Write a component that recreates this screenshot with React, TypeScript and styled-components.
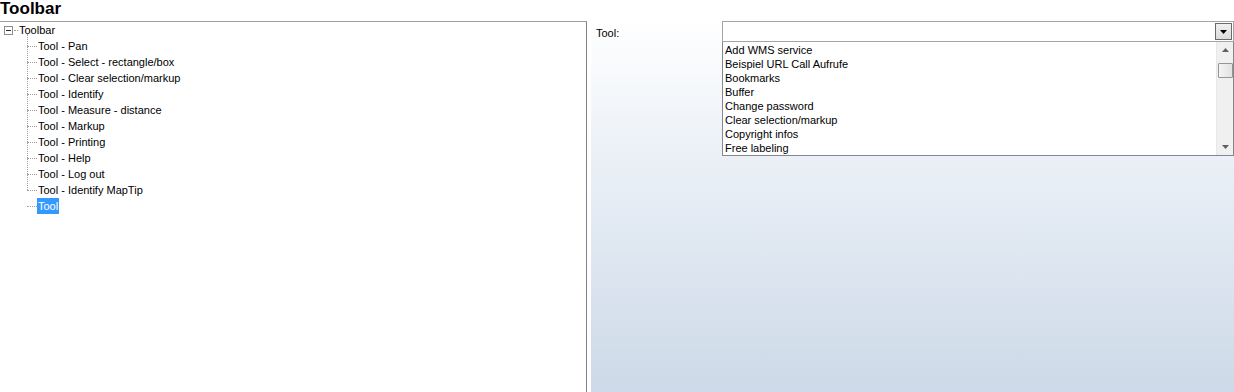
import styled, { createGlobalStyle } from "styled-components";

const GlobalStyle = createGlobalStyle`
  html, body {
    margin: 0;
    padding: 0;
    background: #ffffff;
  }
  body {
    font-family: "Liberation Sans", Arial, sans-serif;
    font-size: 11px;
    color: #000000;
  }
`;

const Page = styled.div`
  width: 1234px;
  height: 392px;
  display: flex;
  flex-direction: column;
  overflow: hidden;
`;

const Title = styled.h1`
  margin: 0;
  height: 21px;
  font-size: 17px;
  font-weight: bold;
  line-height: 18px;
  padding-left: 0;
`;

const Main = styled.div`
  flex: 1;
  display: flex;
  gap: 4px;
`;

const TreePanel = styled.div`
  width: 586px;
  border-top: 1px solid #a0a0a0;
  border-right: 1px solid #828282;
  padding: 0 0 0 4px;
  box-sizing: content-box;
`;

const TreeRow = styled.div`
  height: 16px;
  display: flex;
  align-items: center;
`;

const Expander = styled.span`
  width: 7px;
  height: 7px;
  border: 1px solid #8c8c8c;
  position: relative;
  margin-right: 1px;
  &::after {
    content: "";
    position: absolute;
    left: 1px;
    top: 3px;
    width: 5px;
    height: 1px;
    background: #2c2c2c;
  }
`;

const RootStub = styled.span`
  width: 4px;
  border-top: 1px dotted #a0a0a0;
  margin-right: 0;
`;

const Children = styled.div`
  margin-left: 23px;
  position: relative;
  &::before {
    content: "";
    position: absolute;
    left: 0;
    top: -4px;
    height: 156px;
    border-left: 1px dotted #a0a0a0;
  }
`;

const Branch = styled.span`
  width: 10px;
  border-top: 1px dotted #a0a0a0;
`;

const Label = styled.span<{ $selected?: boolean }>`
  line-height: 16px;
  padding: 0 1px;
  background: ${(p) => (p.$selected ? "#3399ff" : "transparent")};
  color: ${(p) => (p.$selected ? "#ffffff" : "#000000")};
`;

const RightPanel = styled.div`
  flex: 1;
  background: linear-gradient(to bottom, #ffffff 0%, #e9eff6 40%, #cdd9e8 100%);
  display: grid;
  grid-template-columns: 131px 512px;
  align-content: start;
`;

const FieldLabel = styled.div`
  padding: 5px 0 0 5px;
  line-height: 14px;
`;

const Combo = styled.div`
  display: flex;
  flex-direction: column;
`;

const ComboBox = styled.div`
  height: 19px;
  border: 1px solid #a5a5a5;
  background: #ffffff;
  display: flex;
  justify-content: flex-end;
  align-items: center;
  padding-right: 1px;
`;

const DropButton = styled.div`
  width: 15px;
  height: 15px;
  border: 1px solid #6a6a6a;
  background: linear-gradient(#f0f0f0, #dcdcdc);
  display: flex;
  align-items: center;
  justify-content: center;
`;

const ListBox = styled.div`
  height: 113px;
  border: 1px solid #828790;
  border-top: none;
  background: #ffffff;
  display: flex;
`;

const Items = styled.div`
  flex: 1;
  padding: 1px 0 0 2px;
`;

const Item = styled.div`
  line-height: 14px;
  height: 14px;
  white-space: nowrap;
`;

const ScrollBar = styled.div`
  width: 16px;
  background: #f0f0f0;
  border-left: 1px solid #e8e8e8;
  display: flex;
  flex-direction: column;
  align-items: center;
`;

const ScrollArrow = styled.div`
  height: 16px;
  width: 16px;
  display: flex;
  align-items: center;
  justify-content: center;
`;

const Thumb = styled.div`
  width: 13px;
  height: 13px;
  border: 1px solid #959595;
  border-radius: 1px;
  background: linear-gradient(to right, #f4f4f4, #e2e2e2);
  margin-top: 5px;
`;

const Spacer = styled.div`
  flex: 1;
`;

const tools = [
  "Tool - Pan",
  "Tool - Select - rectangle/box",
  "Tool - Clear selection/markup",
  "Tool - Identify",
  "Tool - Measure - distance",
  "Tool - Markup",
  "Tool - Printing",
  "Tool - Help",
  "Tool - Log out",
  "Tool - Identify MapTip",
];

const options = [
  "Add WMS service",
  "Beispiel URL Call Aufrufe",
  "Bookmarks",
  "Buffer",
  "Change password",
  "Clear selection/markup",
  "Copyright infos",
  "Free labeling",
];

function Triangle({ up, color = "#000" }: { up?: boolean; color?: string }) {
  return (
    <svg width="7" height="4" viewBox="0 0 7 4">
      <path d={up ? "M3.5 0 L7 4 L0 4 Z" : "M0 0 L7 0 L3.5 4 Z"} fill={color} />
    </svg>
  );
}

export default function App() {
  return (
    <>
      <GlobalStyle />
      <Page>
        <Title>Toolbar</Title>
        <Main>
          <TreePanel>
            <TreeRow>
              <Expander />
              <RootStub />
              <Label>Toolbar</Label>
            </TreeRow>
            <Children>
              {tools.map((t) => (
                <TreeRow key={t}>
                  <Branch />
                  <Label>{t}</Label>
                </TreeRow>
              ))}
              <TreeRow>
                <Branch />
                <Label $selected>Tool</Label>
              </TreeRow>
            </Children>
          </TreePanel>
          <RightPanel>
            <FieldLabel>Tool:</FieldLabel>
            <Combo>
              <ComboBox>
                <DropButton>
                  <Triangle />
                </DropButton>
              </ComboBox>
              <ListBox>
                <Items>
                  {options.map((o) => (
                    <Item key={o}>{o}</Item>
                  ))}
                </Items>
                <ScrollBar>
                  <ScrollArrow>
                    <Triangle up color="#606060" />
                  </ScrollArrow>
                  <Thumb />
                  <Spacer />
                  <ScrollArrow>
                    <Triangle color="#606060" />
                  </ScrollArrow>
                </ScrollBar>
              </ListBox>
            </Combo>
          </RightPanel>
        </Main>
      </Page>
    </>
  );
}
